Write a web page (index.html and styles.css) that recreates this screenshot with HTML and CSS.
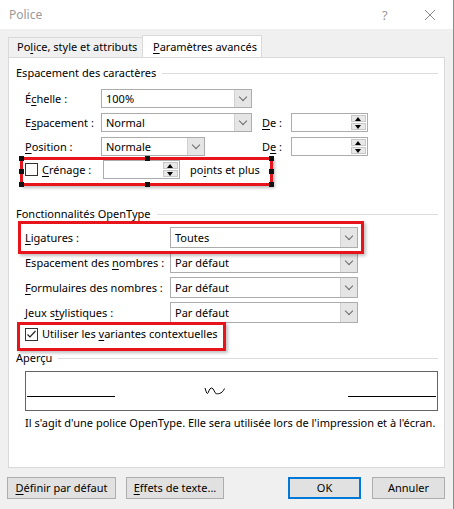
FILE: index.html
```html
<!DOCTYPE html>
<html lang="fr">
<head>
    <meta charset="UTF-8">
    <title>Police</title>
    <link rel="stylesheet" href="styles.css">
</head>
<body>
    <div class="titlebar">
        <span class="title">Police</span>
        <span class="help">?</span>
        <svg class="close" width="12" height="12" viewBox="0 0 12 12"><path d="M1 1 L11 11 M11 1 L1 11" stroke="#8a8a8a" stroke-width="1"/></svg>
    </div>

    <div class="tabs">
        <div class="tab">Po<u>l</u>ice, style et attributs</div>
        <div class="tab active"><u>P</u>aramètres avancés</div>
    </div>

    <div class="panel">
        <div class="group-title">Espacement des caractères</div>

        <div class="spacing-grid">
            <span class="label">É<u>c</u>helle :</span>
            <div class="select"><span class="val">100%</span><span class="arrow"></span></div>
            <span></span><span></span>

            <span class="label">E<u>s</u>pacement :</span>
            <div class="select"><span class="val">Normal</span><span class="arrow"></span></div>
            <span class="label de"><u>D</u>e :</span>
            <div class="spin"><span class="val"></span><span class="spin-btns"><i class="up"></i><i class="down"></i></span></div>

            <span class="label"><u>P</u>osition :</span>
            <div class="select short"><span class="val">Normale</span><span class="arrow"></span></div>
            <span class="label de">D<u>e</u> :</span>
            <div class="spin"><span class="val"></span><span class="spin-btns"><i class="up"></i><i class="down"></i></span></div>
        </div>

        <div class="kern-row">
            <span class="checkbox"></span>
            <span class="kern-label"><u>C</u>rénage :</span>
            <div class="spin kern-spin"><span class="val"></span><span class="spin-btns"><i class="up"></i><i class="down"></i></span></div>
            <span>po<u>i</u>nts et plus</span>
        </div>

        <div class="group-title second">Fonctionnalités OpenType</div>

        <div class="ot-rows">
            <div class="ot-row">
                <span class="label"><u>L</u>igatures :</span>
                <div class="select"><span class="val">Toutes</span><span class="arrow"></span></div>
            </div>
            <div class="ot-row">
                <span class="label">Espacement des <u>n</u>ombres :</span>
                <div class="select"><span class="val">Par défaut</span><span class="arrow"></span></div>
            </div>
            <div class="ot-row">
                <span class="label"><u>F</u>ormulaires des nombres :</span>
                <div class="select"><span class="val">Par défaut</span><span class="arrow"></span></div>
            </div>
            <div class="ot-row">
                <span class="label">Jeux s<u>t</u>ylistiques :</span>
                <div class="select"><span class="val">Par défaut</span><span class="arrow"></span></div>
            </div>
        </div>

        <div class="check-row">
            <span class="checkbox checked">
                <svg width="11" height="11" viewBox="0 0 11 11"><path d="M1.5 5.5 L4 8 L9.5 2" fill="none" stroke="#222" stroke-width="1.2"/></svg>
            </span>
            <span>Utiliser les <u>v</u>ariantes contextuelles</span>
        </div>

        <div class="group-title third">Aperçu</div>

        <div class="preview">
            <span class="base-line"></span>
            <svg class="glyph" width="23" height="8" viewBox="0 0 23 8"><path d="M1 1 C2 4, 2.5 6.5, 3.5 6.5 C4.5 6.5, 5 1, 7.5 1 C10 1, 10.5 6.5, 12 6.5 C13 7, 18 7.5, 20.5 1.5" fill="none" stroke="#000" stroke-width="1"/></svg>
            <span class="base-line right"></span>
        </div>

        <div class="caption">Il s'agit d'une police OpenType. Elle sera utilisée lors de l'impression et à l'écran.</div>

        <!-- annotations -->
        <div class="mark mark-kern">
            <i class="h tl"></i><i class="h tm"></i><i class="h tr"></i>
            <i class="h ml"></i><i class="h mr"></i>
            <i class="h bl"></i><i class="h bm"></i><i class="h br"></i>
        </div>
        <div class="mark mark-lig"></div>
        <div class="mark mark-check"></div>
    </div>

    <div class="footer">
        <button class="btn btn-default"><u>D</u>éfinir par défaut</button>
        <button class="btn btn-effects"><u>E</u>ffets de texte...</button>
        <span class="spacer"></span>
        <button class="btn btn-ok">OK</button>
        <button class="btn btn-cancel">Annuler</button>
    </div>
</body>
</html>
```

FILE: styles.css
```css
* {
    box-sizing: border-box;
}

body {
    margin: 0;
    width: 454px;
    height: 509px;
    background-color: #f0f0f0;
    font-family: "Noto Sans", "Open Sans", sans-serif;
    font-size: 11px;
    line-height: 16px;
    color: #000;
    white-space: nowrap;
    border-right: 1px solid #8c8c8c;
    overflow: hidden;
}

u {
    text-decoration-thickness: 1px;
    text-underline-offset: 2px;
}

/* barre de titre */
.titlebar {
    height: 29px;
    background-color: #fff;
    display: flex;
    align-items: center;
    padding-left: 9px;
}

.title {
    color: #999;
    flex: 1;
    font-size: 12px;
}

.help {
    color: #999;
    width: 42px;
    font-size: 13px;
}

.close {
    margin-right: 17px;
}

/* onglets */
.tabs {
    height: 28px;
    display: flex;
    align-items: flex-end;
    padding-left: 8px;
}

.tab {
    height: 20px;
    width: 135px;
    border: 1px solid #d9d9d9;
    border-bottom: none;
    padding-left: 8px;
    line-height: 18px;
}

.tab.active {
    width: 120px;
    height: 23px;
    margin-left: -1px;
    margin-bottom: -1px;
    background-color: #fff;
    padding-left: 10px;
    line-height: 21px;
    position: relative;
}

/* panneau */
.panel {
    position: relative;
    margin-left: 8px;
    width: 437px;
    height: 411px;
    background-color: #fff;
    border: 1px solid #d9d9d9;
    padding: 0 6px 0 7px;
}

.group-title {
    display: flex;
    align-items: center;
    height: 16px;
    margin-top: 7px;
}

.group-title::after {
    content: "";
    flex: 1;
    height: 1px;
    background-color: #dcdcdc;
    margin-left: 6px;
}

.group-title.second {
    margin-top: 27px;
}

.group-title.third {
    margin-top: 8px;
}

.spacing-grid {
    display: grid;
    grid-template-columns: 76px 151px 39px 87px;
    row-gap: 5px;
    margin-top: 8px;
    padding-left: 9px;
    align-items: center;
}

.spacing-grid .de {
    padding-left: 10px;
}

.select {
    display: flex;
    height: 19px;
    border: 1px solid #acacac;
    background-color: #fff;
}

.select.short {
    width: 104px;
}

.select .val {
    flex: 1;
    padding-left: 4px;
    line-height: 17px;
}

.select .arrow {
    width: 17px;
    background-color: #e5e5e5;
    border-left: 1px solid #d0d0d0;
    position: relative;
}

.select .arrow::after {
    content: "";
    position: absolute;
    left: 5px;
    top: 4px;
    width: 5px;
    height: 5px;
    border-right: 1px solid #6a6a6a;
    border-bottom: 1px solid #6a6a6a;
    transform: rotate(45deg);
}

.spin {
    display: flex;
    height: 19px;
    width: 77px;
    border: 1px solid #acacac;
    background-color: #fff;
}

.spin .val {
    flex: 1;
}

.spin-btns {
    width: 16px;
    display: flex;
    flex-direction: column;
    padding: 1px 1px 1px 0;
    gap: 1px;
}

.spin-btns i {
    flex: 1;
    background-color: #e8e8e8;
    border: 1px solid #c8c8c8;
    position: relative;
}

.spin-btns i::after {
    content: "";
    position: absolute;
    left: 3px;
    top: 1px;
    width: 0;
    height: 0;
    border-left: 3px solid transparent;
    border-right: 3px solid transparent;
}

.spin-btns .up::after {
    border-bottom: 4px solid #000;
}

.spin-btns .down::after {
    border-top: 4px solid #000;
}

.kern-row {
    display: flex;
    align-items: center;
    height: 19px;
    margin-top: 4px;
    padding-left: 9px;
}

.checkbox {
    width: 13px;
    height: 13px;
    border: 1px solid #333;
    background-color: #fff;
    display: flex;
    align-items: center;
    justify-content: center;
}

.kern-label {
    margin-left: 4px;
    width: 61px;
}

.kern-spin {
    margin-right: 10px;
}

.ot-rows {
    display: flex;
    flex-direction: column;
    gap: 4px;
    margin-top: 5px;
    padding-left: 9px;
}

.ot-row {
    display: flex;
    align-items: center;
}

.ot-row .label {
    width: 145px;
}

.ot-row .select {
    width: 188px;
    height: 21px;
}

.ot-row .select .val {
    line-height: 19px;
}

.ot-row .select .arrow::after {
    top: 5px;
}

.check-row {
    display: flex;
    align-items: center;
    gap: 4px;
    height: 16px;
    margin-top: 3px;
    padding-left: 9px;
}

.preview {
    margin-top: 5px;
    margin-left: 9px;
    width: 413px;
    height: 40px;
    border: 1px solid #646464;
    display: flex;
    align-items: flex-end;
    padding: 0 1px 13px;
}

.base-line {
    width: 88px;
    height: 1px;
    background-color: #000;
}

.base-line.right {
    margin-left: auto;
}

.glyph {
    margin-left: 89px;
    margin-bottom: 2px;
}

.caption {
    margin-top: 4px;
    margin-left: 9px;
}

/* annotations rouges */
.mark {
    position: absolute;
    border: 3px solid #e8141c;
    box-shadow: 2px 2px 3px rgba(0, 0, 0, 0.25);
}

.mark-kern {
    left: 11px;
    top: 99px;
    width: 253px;
    height: 29px;
}

.mark-lig {
    left: 9px;
    top: 163px;
    width: 346px;
    height: 33px;
}

.mark-check {
    left: 8px;
    top: 264px;
    width: 209px;
    height: 29px;
}

.h {
    position: absolute;
    width: 5px;
    height: 5px;
    background-color: #111;
}

.tl { left: -4px; top: -4px; }
.tm { left: calc(50% - 2px); top: -4px; }
.tr { right: -4px; top: -4px; }
.ml { left: -4px; top: calc(50% - 3px); }
.mr { right: -4px; top: calc(50% - 3px); }
.bl { left: -4px; bottom: -4px; }
.bm { left: calc(50% - 2px); bottom: -4px; }
.br { right: -4px; bottom: -4px; }

/* boutons */
.footer {
    display: flex;
    margin-top: 9px;
    padding: 0 8px 0 7px;
}

.btn {
    height: 22px;
    font: inherit;
    color: #000;
    background-color: #e1e1e1;
    border: 1px solid #adadad;
    padding: 0;
}

.btn-default {
    width: 109px;
}

.btn-effects {
    width: 98px;
    margin-left: 10px;
}

.spacer {
    flex: 1;
}

.btn-ok {
    width: 73px;
    border: 2px solid #0078d7;
}

.btn-cancel {
    width: 73px;
    margin-left: 11px;
}
```
